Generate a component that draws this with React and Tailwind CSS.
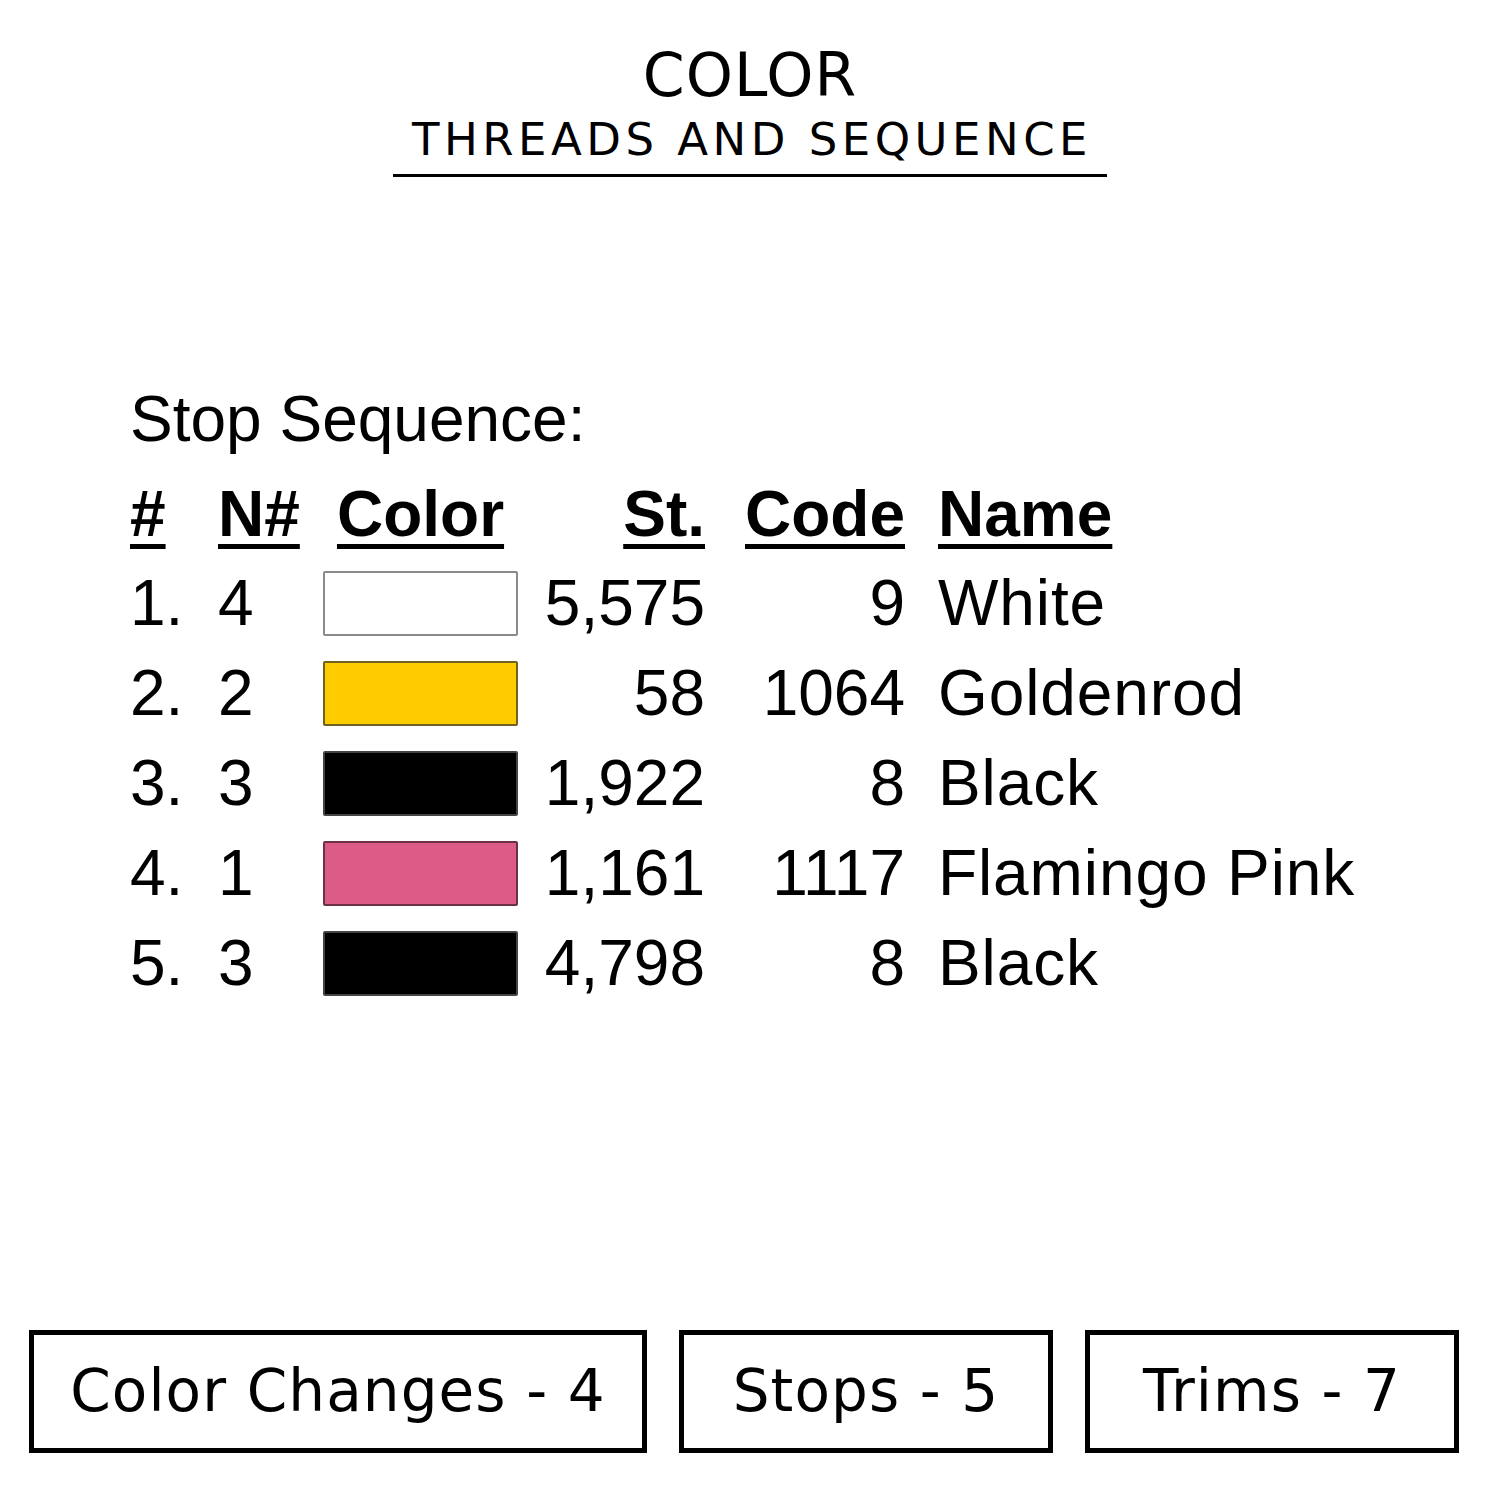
import React from 'react';

const ROWS = [
  { n: '1.', needle: '4', swatch: 'bg-white border-[#8a8a8a]', st: '5,575', code: '9', name: 'White' },
  { n: '2.', needle: '2', swatch: 'bg-[#ffcc00] border-[#6f6220]', st: '58', code: '1064', name: 'Goldenrod' },
  { n: '3.', needle: '3', swatch: 'bg-black border-[#444]', st: '1,922', code: '8', name: 'Black' },
  { n: '4.', needle: '1', swatch: 'bg-[#dc5c87] border-[#6b3245]', st: '1,161', code: '1117', name: 'Flamingo Pink' },
  { n: '5.', needle: '3', swatch: 'bg-black border-[#444]', st: '4,798', code: '8', name: 'Black' }
];

const STATS = [
  { label: 'Color Changes - 4', w: 'w-[618px]' },
  { label: 'Stops - 5', w: 'w-[374px]' },
  { label: 'Trims - 7', w: 'w-[374px]' }
];

const COLS = 'grid grid-cols-[88px_105px_195px_187px_200px_1fr]';
const UL = 'underline decoration-[5px] underline-offset-[8px]';

export default function App() {
  return (
    <div className="w-[1500px] h-[1500px] bg-white text-black flex flex-col">
      {/* Title */}
      <div className="flex flex-col items-center pt-[38px] font-['DejaVu_Sans',sans-serif]">
        <h1 className="text-[60px] leading-[74px] tracking-[1px]">COLOR</h1>
        <div className="pl-[19px] pr-[15px] pb-[6px] border-b-[3px] border-black">
          <p className="text-[45px] leading-[56px] tracking-[4.5px]">THREADS AND SEQUENCE</p>
        </div>
      </div>

      {/* Stop sequence table */}
      <div className="pl-[130px] pt-[197px] font-['Liberation_Sans',Arial,sans-serif] text-[64px]">
        <p className="leading-[90px]">Stop Sequence:</p>
        <div className={`${COLS} mt-[5px] h-[89px] leading-[90px] font-bold items-start`}>
          <span className={UL}>#</span>
          <span className={UL}>N#</span>
          <span className={`text-center ${UL}`}>Color</span>
          <span className={`text-right ${UL}`}>St.</span>
          <span className={`text-right ${UL}`}>Code</span>
          <span className="pl-[33px]"><span className={UL}>Name</span></span>
        </div>
        {ROWS.map((r, i) => (
          <div key={i} className={`${COLS} h-[90px] leading-[90px] items-center`}>
            <span>{r.n}</span>
            <span>{r.needle}</span>
            <span className={`h-[65px] border-2 rounded-[2px] ${r.swatch}`} />
            <span className="text-right">{r.st}</span>
            <span className="text-right">{r.code}</span>
            <span className="pl-[33px] whitespace-nowrap tracking-[0.9px]">{r.name}</span>
          </div>
        ))}
      </div>

      {/* Stats */}
      <div className="mt-auto mb-[47px] flex gap-[32px] pl-[29px] font-['DejaVu_Sans',sans-serif]">
        {STATS.map((s) => (
          <div key={s.label} className={`${s.w} h-[123px] border-[5px] border-black flex items-center justify-center`}>
            <span className="text-[58px] tracking-[1.1px]">{s.label}</span>
          </div>
        ))}
      </div>
    </div>
  );
}
